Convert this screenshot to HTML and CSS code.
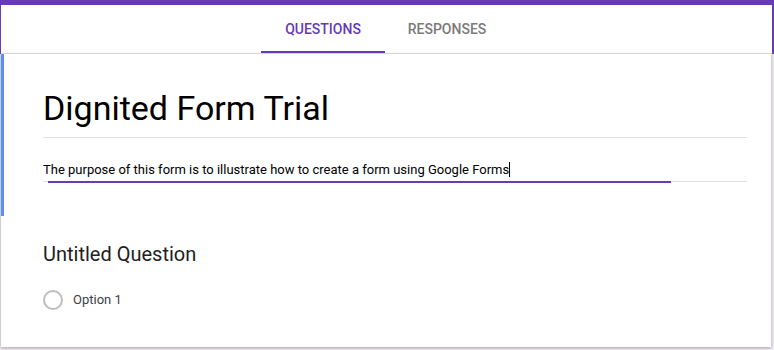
FILE: index.html
```html
<!DOCTYPE html>
<html lang="en">
<head>
    <meta charset="UTF-8">
    <meta name="viewport" content="width=device-width, initial-scale=1.0">
    <title>Dignited Form Trial</title>
    <link rel="stylesheet" href="styles.css">
</head>
<body>
    <header class="topbar">
        <nav class="tabs">
            <a class="tab active" href="#">Questions</a>
            <a class="tab" href="#">Responses</a>
        </nav>
    </header>

    <main class="page">
        <div class="card">
            <section class="form-header">
                <h1 class="form-title">Dignited Form Trial</h1>
                <div class="form-desc">
                    The purpose of this form is to illustrate how to create a form using Google Forms<span class="caret"></span>
                </div>
            </section>

            <section class="question">
                <h2 class="question-title">Untitled Question</h2>
                <label class="option">
                    <span class="radio"></span>
                    <span class="option-label">Option 1</span>
                </label>
            </section>
        </div>
    </main>
</body>
</html>
```

FILE: styles.css
```css
body {
    margin: 0;
    background: #ebe8f1;
    font-family: Roboto, 'Liberation Sans', Arial, sans-serif;
    color: #202124;
}
.topbar {
    background: #673ab7;
    padding: 5px 2px 0 1px;
}
.tabs {
    display: flex;
    justify-content: center;
    background: #fff;
    padding-right: 3px;
    border-bottom: 1px solid #e0e0e0;
}
.tab {
    width: 124px;
    height: 48px;
    box-sizing: border-box;
    padding-top: 1px;
    display: flex;
    align-items: center;
    justify-content: center;
    font-size: 14px;
    font-weight: 500;
    text-transform: uppercase;
    text-decoration: none;
    color: #7a7a7a;
    border-bottom: 2px solid transparent;
}
.tab.active {
    color: #673ab7;
    border-bottom-color: #673ab7;
}
.page {
    padding: 0 3px 3px 1px;
}
.card {
    background: #fff;
    box-shadow: 0 1px 3px rgba(0, 0, 0, 0.3);
}
.form-header {
    height: 162px;
    box-sizing: border-box;
    border-left: 3px solid #5b8ff5;
    padding: 34px 24px 0 39px;
}
.form-title {
    margin: 0;
    font-size: 34px;
    font-weight: 400;
    line-height: 40px;
    color: #000;
    padding-bottom: 9px;
    border-bottom: 1px solid #e0e0e0;
}
.form-desc {
    position: relative;
    margin-top: 22px;
    font-size: 13px;
    line-height: 19px;
    color: #000;
    padding-bottom: 2px;
    border-bottom: 1px solid #e0e0e0;
}
.form-desc::after {
    content: '';
    position: absolute;
    left: 5px;
    width: 623px;
    bottom: -2px;
    height: 2px;
    background: #673ab7;
}
.caret {
    display: inline-block;
    width: 1px;
    height: 15px;
    background: #000;
    vertical-align: -3px;
}
.question {
    height: 131px;
    box-sizing: border-box;
    padding: 24px 24px 0 42px;
}
.question-title {
    margin: 0 0 22px;
    font-size: 20px;
    font-weight: 400;
    line-height: 28px;
    color: #212121;
}
.option {
    display: flex;
    align-items: center;
    gap: 10px;
}
.radio {
    width: 20px;
    height: 20px;
    box-sizing: border-box;
    border: 2px solid #bdbdbd;
    border-radius: 50%;
}
.option-label {
    font-size: 13px;
    line-height: 20px;
    color: #3c4043;
}
```
